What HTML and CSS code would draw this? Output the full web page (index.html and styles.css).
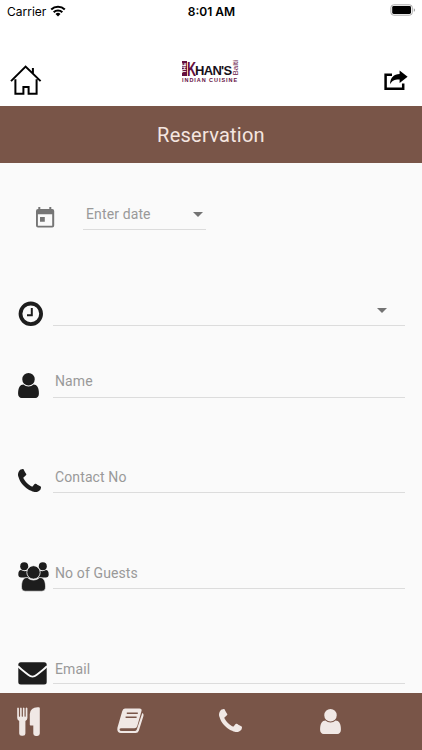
FILE: index.html
```
<!DOCTYPE html>
<html lang="en">
<head>
    <meta charset="UTF-8">
    <meta name="viewport" content="width=device-width, initial-scale=1.0">
    <title>Reservation</title>
    <link rel="stylesheet" href="styles.css">
</head>
<body>
    <!-- shared icons -->
    <svg class="hidden">
        <symbol id="phone" viewBox="0 0 1408 1408">
            <path d="M1408 1112q0 27-10 70.5t-21 68.5q-21 50-122 106-94 51-186 51-27 0-52.5-3.5t-57.5-12.5-47.5-14.5-55.5-20.5-49-18q-98-35-175-83-128-79-264.5-215.5t-215.5-264.5q-48-77-83-175-3-9-18-49t-20.5-55.5-14.5-47.5-12.5-57.5-3.5-52.5q0-92 51-186 56-101 106-122 25-11 68.5-21t70.5-10q14 0 21 3 18 6 53 76 11 19 30 54t35 63.5 31 53.5q3 4 17.5 25t21.5 35.5 7 28.5q0 20-28.5 50t-62 55-62 53-28.5 46q0 9 5 22.5t8.5 20.5 14 24 11.5 19q76 137 174 235t235 174q2 1 19 11.5t24 14 20.5 8.5 22.5 5q18 0 46-28.5t53-62 55-62 50-28.5q14 0 28.5 7t35.5 21.5 25 17.5q25 15 53.5 31t63.5 35 54 30q70 35 76 53 3 7 3 21z"/>
        </symbol>
        <symbol id="user" viewBox="256 128 1280 1536">
            <path d="M1536 1399q0 109-62.5 187t-150.5 78h-854q-88 0-150.5-78t-62.5-187q0-85 8.500-160.500t31.500-152 58.500-131 94-89 134.500-34.500q131 128 313 128t313-128q76 0 134.500 34.500t94 89 58.500 131 31.500 152 8.500 160.500zm-256-887q0 159-112.500 271.500t-271.500 112.500-271.500-112.500-112.500-271.500 112.500-271.500 271.500-112.500 271.500 112.500 112.500 271.500z"/>
        </symbol>
    </svg>

    <div class="app">
        <div class="status-bar">
            <div class="carrier">
                <span>Carrier</span>
                <svg width="16" height="12" viewBox="0 0 16 12">
                    <path d="M1.2 4.6a9.7 9.7 0 0 1 13.6 0M3.7 7.2a6.1 6.1 0 0 1 8.6 0" fill="none" stroke="#000" stroke-width="2.1"/>
                    <path d="M5.5 8.9a3.6 3.6 0 0 1 5 0L8 11.5z"/>
                </svg>
            </div>
            <div class="clock">8:01 AM</div>
            <div class="battery">
                <svg width="26" height="12" viewBox="0 0 26 12">
                    <rect x=".9" y=".8" width="21.4" height="10.4" rx="2.8" fill="none" stroke="#aaa"/>
                    <rect x="2.2" y="2.1" width="18.8" height="7.8" rx="1.4"/>
                    <path d="M23.8 4.2c1.6.5 1.6 3.1 0 3.6z" fill="#999"/>
                </svg>
            </div>
        </div>

        <div class="header">
            <svg class="home" width="32" height="32" viewBox="0 0 32 32">
                <path d="M1 17.1L15.6 2.6 30.6 17.1M5.4 15.3v14.4h8v-6.8h5.2v6.8h8V15.3M22.9 9.5V4.1" fill="none" stroke="#000" stroke-width="2"/>
            </svg>
            <div class="logo">
                <div class="logo-top">
                    <span class="logo-the">THE</span><span class="logo-k">K</span><span class="logo-han">HAN'S</span><span class="logo-balti">Balti</span>
                </div>
                <div class="logo-sub">INDIAN CUISINE</div>
            </div>
            <svg class="share" width="24" height="21" viewBox="0 0 24 21">
                <path d="M8 4.8H1.6v14h17.6v-5.2" fill="none" stroke="#000" stroke-width="2.5"/>
                <path d="M15.6.4L23.6 6.8 15.6 13V9.6C11 9.4 8.4 10.4 6 14.2 6.4 7.6 9.7 4.2 15.6 4z"/>
            </svg>
        </div>

        <h1>Reservation</h1>

        <div class="form">
            <div class="row row-date">
                <svg width="20" height="21" viewBox="0 0 20 21">
                    <path d="M3.3 0h2v2.1h9V0h2v2.1h.9a2 2 0 0 1 2 2v14.5a2 2 0 0 1-2 2H3a2 2 0 0 1-2-2V4.100a2 2 0 0 1 2-2h.3zM2.900 7.200v11.500h14.300V7.200zM5 10h4.800v4.800H5z" fill-rule="evenodd"/>
                </svg>
                <div class="field"><span>Enter date</span><i class="caret"></i></div>
            </div>
            <div class="row row-time">
                <svg class="icon" width="25" height="25" viewBox="0 0 25 25">
                    <circle cx="12.800" cy="12.800" r="10.300" fill="none" stroke="#1d1d1d" stroke-width="3.800"/>
                    <path d="M13.800 6.900v7.300H9" fill="none" stroke="#1d1d1d" stroke-width="2"/>
                </svg>
                <div class="field"><i class="caret"></i></div>
            </div>
            <div class="row row-name">
                <svg class="icon" width="21" height="25"><use href="#user"/></svg>
                <div class="field"><span>Name</span></div>
            </div>
            <div class="row row-contact">
                <svg class="icon" width="23" height="23"><use href="#phone"/></svg>
                <div class="field"><span>Contact No</span></div>
            </div>
            <div class="row row-guests">
                <svg class="icon" width="31" height="30" viewBox="0 0 31 30">
                    <circle cx="6.200" cy="4.300" r="4"/>
                    <circle cx="24.800" cy="4.300" r="4"/>
                    <path d="M3 8q3 2 6.500.500L13 15.500H3.200Q.300 15.500.300 12.500.300 8 3 8zM28 8q-3 2-6.500.500L18 15.500h9.800q2.900 0 2.900-3 0-4.500-2.700-4.500z"/>
                    <path d="M9.300 15.500q2.700 2.600 6.200 2.600t6.200-2.600c4.300 0 5.800 4 5.800 9.400q0 4.300-4 4.300H7.500q-4 0-4-4.300c0-5.400 1.500-9.400 5.800-9.400z" stroke="#fafafa" stroke-width=".6"/>
                    <circle cx="15.500" cy="10.400" r="6.700" stroke="#fafafa" stroke-width=".8"/>
                </svg>
                <div class="field"><span>No of Guests</span></div>
            </div>
            <div class="row row-email">
                <svg class="icon" width="29" height="23" viewBox="0 0 29 23">
                    <rect x=".300" y=".300" width="28.400" height="22.200" rx="2.500"/>
                    <path d="M0 4.200Q2 6.500 10.200 12.800q4.300 3.600 8.600 0Q27 6.500 29 4.200" fill="none" stroke="#fafafa" stroke-width="1.800"/>
                </svg>
                <div class="field"><span>Email</span></div>
            </div>
        </div>

        <div class="tabs">
            <div class="tab">
                <svg width="24" height="30" viewBox="0 0 24 30">
                    <path d="M.2 1.200q.8-1.200 1.700 0v8q.6 1 1.200 0v-8q.8-1.200 1.600 0v8q.6 1 1.200 0v-8q.8-1.200 1.600 0v8q.6 1 1.200 0v-8q.9-1.200 1.700 0v9.800q0 1.800-2 3v12.400q0 2.400-2.500 2.400H4.700q-2.500 0-2.500-2.400V14q-2-1.200-2-3zM12.800 17.800V7q.7-6.700 7.700-6.700h1.300q1 0 1 1v25.300q0 2.400-2.500 2.400h-1.600q-2.400 0-2.400-2.400v-8.100h-2.800q-.7 0-.7-.7z"/>
                </svg>
            </div>
            <div class="tab">
                <svg width="28" height="26" viewBox="0 0 28 26">
                    <path d="M7.900.500H22.500q2.700 0 2 2.500L20.300 18q-.7 2.200-2.900 2.200H4.300q-1.800 0-1.800 1.200 0 1.500 2.300 1.500h13q1.400 0 2-1.500L25.300 5q1.700.8 1.200 2.700l-4.700 15q-.8 2.300-3.200 2.300H4Q.3 25 .3 21.300q0-1.700.7-3.500L5.200 3.300Q5.900.500 7.900.500z"/>
                    <path d="M9.800 5.300h11M8.600 9.200h11" fill="none" stroke="#795548" stroke-width="1.500"/>
                </svg>
            </div>
            <div class="tab"><svg class="tab-phone" width="23" height="23"><use href="#phone"/></svg></div>
            <div class="tab"><svg class="tab-user" width="21" height="25"><use href="#user"/></svg></div>
        </div>
    </div>
</body>
</html>
```
FILE: styles.css
```
* {
    margin: 0;
    padding: 0;
    box-sizing: border-box;
}

body {
    background: #fafafa;
    font-family: Roboto, sans-serif;
}

svg {
    display: block;
    flex: none;
}

.hidden {
    display: none;
}

.app {
    width: 422px;
    height: 750px;
    display: flex;
    flex-direction: column;
    overflow: hidden;
}

.status-bar {
    height: 22px;
    flex: none;
    display: flex;
    align-items: center;
    background: #fff;
    font-family: Inter, sans-serif;
    font-size: 12px;
    color: #000;
    padding: 0 6px 0 7px;
}

.carrier,
.battery {
    flex: 1;
    display: flex;
    align-items: center;
    gap: 4px;
}

.carrier svg {
    margin-top: -1px;
}

.battery {
    justify-content: flex-end;
}

.battery svg {
    margin-top: -2px;
}

.clock {
    font-weight: 600;
}

.header {
    height: 84px;
    flex: none;
    display: flex;
    justify-content: space-between;
    align-items: flex-start;
    background: #fff;
    padding: 36px 14px 0 10px;
}

.home {
    margin-top: 6px;
}

.share {
    margin-top: 12px;
}

.logo {
    width: 58px;
    margin-left: -4px;
    color: #17101a;
    font-family: "Liberation Sans", sans-serif;
    white-space: nowrap;
}

.logo-top {
    display: flex;
    align-items: flex-end;
    height: 18px;
}

.logo-the {
    writing-mode: vertical-rl;
    transform: rotate(180deg);
    width: 5px;
    height: 15px;
    background: #64103f;
    color: #fff;
    font-size: 5px;
    font-weight: bold;
    line-height: 5px;
    text-align: center;
}

.logo-k {
    width: 8px;
    color: #64103f;
    font-size: 21px;
    font-weight: bold;
    line-height: 15px;
    transform: scaleX(0.6);
    transform-origin: left;
}

.logo-han {
    width: 37px;
    font-size: 13px;
    font-weight: bold;
    line-height: 11px;
    letter-spacing: -0.7px;
}

.logo-balti {
    writing-mode: vertical-rl;
    transform: rotate(180deg);
    width: 7px;
    color: #64103f;
    font-size: 8px;
    line-height: 7px;
}

.logo-sub {
    color: #64103f;
    font-size: 5.5px;
    font-weight: bold;
    line-height: 6px;
    letter-spacing: 0.95px;
    margin-top: 1px;
}

h1 {
    height: 57px;
    flex: none;
    background: #795548;
    color: #f5e6e0;
    font-size: 20px;
    font-weight: 400;
    line-height: 58px;
    letter-spacing: 0.25px;
    text-align: center;
}

.form {
    flex: 1;
    min-height: 0;
    overflow: hidden;
    padding: 35px 17px 0 18px;
}

.row {
    height: 32px;
    display: flex;
    align-items: flex-end;
    fill: #1d1d1d;
}

.row-date {
    width: 188px;
    padding-left: 17px;
    fill: #757575;
}

.row-date svg {
    margin-bottom: 2px;
    margin-right: 28px;
}

.row-time {
    margin-top: 64px;
}

.row-name {
    margin-top: 40px;
}

.row-contact,
.row-email {
    margin-top: 63px;
}

.row-guests {
    margin-top: 64px;
}

.icon {
    margin-right: auto;
}

.row-contact .icon {
    margin-bottom: 1px;
}

.row-guests .icon {
    margin-bottom: -3px;
}

.row-email .icon {
    margin-bottom: -1px;
}

.field {
    width: 352px;
    height: 32px;
    flex: none;
    display: flex;
    justify-content: space-between;
    border-bottom: 1px solid #dcdcdc;
    padding: 6px 18px 0 2px;
    color: #999;
    font-size: 14px;
    line-height: 20px;
    letter-spacing: 0.12px;
}

.row-name .field {
    padding-top: 5px;
}

.row-date .field {
    width: 123px;
    padding-right: 3px;
    padding-left: 3px;
}

.row-email .field {
    padding-top: 7px;
}

.caret {
    border: 5.5px solid transparent;
    border-top-color: #737373;
    border-bottom: 0;
    height: 0;
    margin: 8px 0 0 auto;
}

.tabs {
    height: 57px;
    flex: none;
    display: flex;
    background: #795548;
    fill: #f0e8e5;
    padding: 14px 0 0 17px;
}

.tab {
    width: 101px;
}

.tab:nth-child(2) svg {
    margin: 1px 0 0 -1px;
}

.tab-phone {
    margin-top: 2px;
}

.tab-user {
    margin-top: 2px;
}
```
